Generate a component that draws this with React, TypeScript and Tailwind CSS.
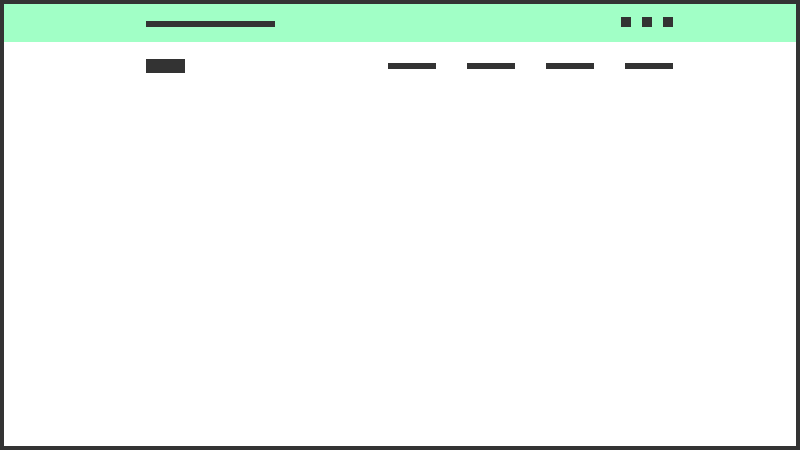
export default function App() {
  const navItems = ["Home", "About", "Work", "Contact"]
  const squares = [0, 1, 2]

  return (
    <div className="h-[450px] w-[800px] border-4 border-[#333333] bg-white flex flex-col">
      {/* Top bar */}
      <div className="h-[38px] bg-[#a1ffc6] flex items-start pl-[142px] pr-[123px] justify-between">
        <div className="mt-[17px] h-[6px] w-[129px] bg-[#333333]" />
        <div className="mt-[13px] flex gap-[11px]">
          {squares.map((i) => (
            <div key={i} className="h-[10px] w-[10px] bg-[#333333]" />
          ))}
        </div>
      </div>

      {/* Header */}
      <header className="flex items-center justify-between pl-[142px] pr-[123px] pt-[17px]">
        <div className="h-[14px] w-[39px] bg-[#333333]" />
        <nav className="flex gap-[31px]">
          {navItems.map((item) => (
            <div key={item} aria-label={item} className="h-[6px] w-[48px] bg-[#333333]" />
          ))}
        </nav>
      </header>
    </div>
  )
}
